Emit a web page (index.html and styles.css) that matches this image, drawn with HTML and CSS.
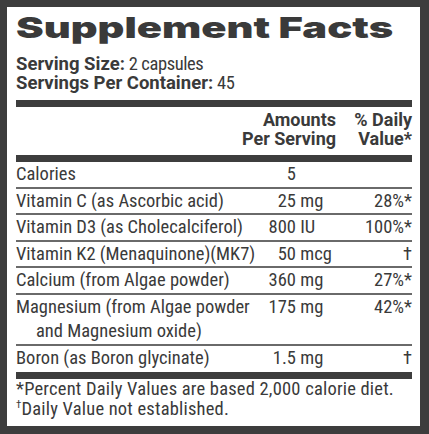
FILE: index.html
```html
<!DOCTYPE html>
<html lang="en">
<head>
    <meta charset="UTF-8">
    <title>Supplement Facts</title>
    <link rel="stylesheet" href="styles.css">
</head>
<body>
    <div class="label">
        <h1 class="title">Supplement Facts</h1>
        <div class="serving">
            <div><b>Serving Size:</b> 2 capsules</div>
            <div><b>Servings Per Container:</b> 45</div>
        </div>
        <div class="bar"></div>
        <div class="head">
            <div class="head-amount">Amounts<br>Per Serving</div>
            <div class="head-dv">% Daily<br>Value*</div>
        </div>
        <div class="bar"></div>
        <div class="rows">
            <div class="row">
                <div class="name">Calories</div>
                <div class="amount"><span class="num">5</span></div>
                <div class="dv"></div>
            </div>
            <div class="row">
                <div class="name">Vitamin C (as Ascorbic acid)</div>
                <div class="amount"><span class="num">25</span> mg</div>
                <div class="dv">28%*</div>
            </div>
            <div class="row">
                <div class="name">Vitamin D3 (as Cholecalciferol)</div>
                <div class="amount"><span class="num">800</span> IU</div>
                <div class="dv">100%*</div>
            </div>
            <div class="row">
                <div class="name">Vitamin K2 (Menaquinone)(MK7)</div>
                <div class="amount"><span class="num">50</span> mcg</div>
                <div class="dv">†</div>
            </div>
            <div class="row">
                <div class="name">Calcium (from Algae powder)</div>
                <div class="amount"><span class="num">360</span> mg</div>
                <div class="dv">27%*</div>
            </div>
            <div class="row">
                <div class="name hang">Magnesium (from Algae powder<br>and Magnesium oxide)</div>
                <div class="amount"><span class="num">175</span> mg</div>
                <div class="dv">42%*</div>
            </div>
            <div class="row">
                <div class="name">Boron (as Boron glycinate)</div>
                <div class="amount"><span class="num">1.5</span> mg</div>
                <div class="dv">†</div>
            </div>
        </div>
        <div class="bar bar-foot"></div>
        <div class="notes">
            <div>*Percent Daily Values are based 2,000 calorie diet.</div>
            <div><sup>†</sup>Daily Value not established.</div>
        </div>
    </div>
</body>
</html>
```

FILE: styles.css
```css
body {
    margin: 0;
    background-color: #3d3d3d;
    font-family: Roboto, 'Liberation Sans', sans-serif;
    font-stretch: 77%;
    color: #3a3a3a;
}

/* White label inside the dark frame */
.label {
    background-color: #FFFFFF;
    margin: 7px 9px 8px 7px;
    height: 419px;
    box-sizing: border-box;
    padding: 0 8px 0 9px;
    overflow: hidden;
}

/* Heavy, wide heading: Inter Black stretched out */
.title {
    margin: 0;
    padding-top: 3px;
    font-family: Inter, 'Liberation Sans', sans-serif;
    font-stretch: normal;
    font-weight: 900;
    font-size: 29px;
    line-height: 36px;
    white-space: nowrap;
    transform: scaleX(1.435);
    transform-origin: left center;
    color: #3a3a3a;
}

.serving {
    font-size: 18.5px;
    line-height: 19px;
    margin-top: 9px;
    font-stretch: 75%;
    letter-spacing: -0.4px;
}

.serving b {
    font-stretch: 90%;
    letter-spacing: 0;
}

.bar {
    height: 7px;
    background-color: #3d3d3d;
    margin-top: 7px;
}

.bar-foot {
    margin-top: 2px;
}

.head {
    display: flex;
    justify-content: flex-end;
    font-weight: 700;
    font-size: 18px;
    font-stretch: 88%;
    line-height: 19px;
    text-align: right;
    padding-top: 3px;
}

.head-amount {
    width: 110px;
    white-space: nowrap;
}

.head-dv {
    width: 76px;
}

.row {
    display: grid;
    grid-template-columns: 1fr 80px 72px;
    font-size: 18.5px;
    line-height: 24.5px;
    border-top: 2px solid #6a6a6a;
}

.row:first-child {
    border-top: none;
}

.name {
    white-space: nowrap;
}

.hang {
    padding-left: 20px;
    text-indent: -20px;
}

.amount {
    white-space: nowrap;
}

.num {
    display: inline-block;
    width: 36px;
    text-align: right;
}

.dv {
    text-align: right;
}

.notes {
    font-size: 18.5px;
    line-height: 19.5px;
    padding-top: 1px;
    letter-spacing: 0.2px;
}

.notes sup {
    font-size: 11px;
    line-height: 0;
}
```
